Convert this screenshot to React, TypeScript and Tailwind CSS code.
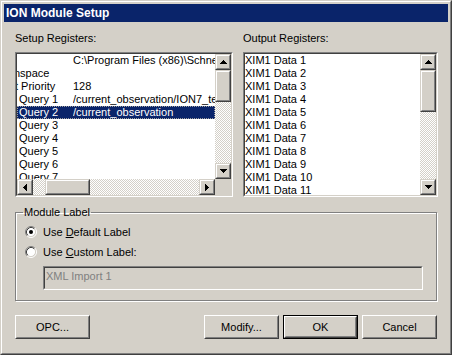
import type { ReactNode } from "react";

const FONT = "font-['Liberation_Sans','Arial',sans-serif]";

// classic 3D raised piece (scrollbar buttons, thumbs)
function Raised({ className, children }: { className: string; children?: ReactNode }) {
  return (
    <div className={`border border-t-[#d4d0c8] border-l-[#d4d0c8] border-r-[#404040] border-b-[#404040] ${className}`}>
      <div className="w-full h-full border border-t-white border-l-white border-r-[#808080] border-b-[#808080] bg-[#d4d0c8] flex items-center justify-center">
        {children}
      </div>
    </div>
  );
}

function Arrow({ dir }: { dir: "up" | "down" | "left" | "right" }) {
  if (dir === "up")
    return (
      <svg width="7" height="4" shapeRendering="crispEdges">
        <path d="M3 0h1v1h1v1h1v1h1v1H0V3h1V2h1V1h1z" fill="#000" />
      </svg>
    );
  if (dir === "down")
    return (
      <svg width="7" height="4" shapeRendering="crispEdges">
        <path d="M0 0h7v1H6v1H5v1H4v1H3V3H2V2H1V1H0z" fill="#000" />
      </svg>
    );
  if (dir === "left")
    return (
      <svg width="4" height="7" shapeRendering="crispEdges">
        <path d="M3 0h1v7H3V6H2V5H1V4H0V3h1V2h1V1h1z" fill="#000" />
      </svg>
    );
  return (
    <svg width="4" height="7" shapeRendering="crispEdges">
      <path d="M0 0h1v1h1v1h1v1h1v1H3v1H2v1H1v1H0z" fill="#000" />
    </svg>
  );
}

const track =
  "bg-[image:repeating-conic-gradient(#d4d0c8_0%_25%,#ffffff_0%_50%)] bg-[length:2px_2px]";

function Sunken({ className, children }: { className: string; children: ReactNode }) {
  return (
    <div className={`border border-t-[#808080] border-l-[#808080] border-r-white border-b-white ${className}`}>
      <div className="w-full h-full border border-t-[#404040] border-l-[#404040] border-r-[#d4d0c8] border-b-[#d4d0c8] flex flex-col overflow-hidden">
        {children}
      </div>
    </div>
  );
}

function Radio({ checked }: { checked: boolean }) {
  return (
    <svg width="12" height="12" className="shrink-0">
      <circle cx="6" cy="6" r="4.5" fill="#fff" />
      <path d="M2.11 9.89A5.5 5.5 0 0 1 9.89 2.11" stroke="#808080" fill="none" />
      <path d="M9.89 2.11A5.5 5.5 0 0 1 2.11 9.89" stroke="#fff" fill="none" />
      <path d="M2.82 9.18A4.5 4.5 0 0 1 9.18 2.82" stroke="#404040" fill="none" />
      <path d="M9.18 2.82A4.5 4.5 0 0 1 2.82 9.18" stroke="#d4d0c8" fill="none" />
      {checked && <circle cx="6" cy="6" r="2" fill="#000" />}
    </svg>
  );
}

function PushButton({ label, isDefault }: { label: string; isDefault?: boolean }) {
  const inner = (
    <div className="w-full h-full border border-t-white border-l-white border-r-[#404040] border-b-[#404040]">
      <div className="w-full h-full border border-t-[#d4d0c8] border-l-[#d4d0c8] border-r-[#808080] border-b-[#808080] bg-[#d4d0c8] flex items-center justify-center">
        {label}
      </div>
    </div>
  );
  return isDefault ? (
    <div className="w-[75px] h-[24px] border border-black">{inner}</div>
  ) : (
    <div className="w-[75px] h-[24px]">{inner}</div>
  );
}

const setupRows: [ReactNode, string][] = [
  ["", "C:\\Program Files (x86)\\Schneider Electric\\ION Enterprise"],
  [<span className="ml-[-5px]">nspace</span>, ""],
  [<span className="ml-[-4px]">t Priority</span>, "128"],
  ["Query 1", "/current_observation/ION7_temp"],
  ["Query 2", "/current_observation"],
  ["Query 3", ""],
  ["Query 4", ""],
  ["Query 5", ""],
  ["Query 6", ""],
  ["Query 7", ""],
];

const outputRows = Array.from({ length: 11 }, (_, i) => `XIM1 Data ${i + 1}`);

export default function App() {
  return (
    <div className={`w-[452px] h-[355px] ${FONT} text-[11px] leading-[13px] text-black`}>
      {/* window frame */}
      <div className="w-full h-full border border-t-[#d4d0c8] border-l-[#d4d0c8] border-r-[#404040] border-b-[#404040]">
        <div className="w-full h-full border border-t-white border-l-white border-r-[#808080] border-b-[#808080] bg-[#d4d0c8] p-[2px] flex flex-col">
          {/* title bar */}
          <div className="h-[18px] bg-[#0a246a] text-white font-bold text-[12px] px-[2px] flex items-center">
            ION Module Setup
          </div>

          <div className="pl-[11px] pt-[10px] flex flex-col">
            {/* register lists */}
            <div className="flex gap-[10px]">
              <div className="flex flex-col w-[218px]">
                <div className="mb-[7px]">Setup Registers:</div>
                <Sunken className="h-[145px]">
                  <div className="flex h-[125px]">
                    <div className="flex-1 min-w-0 overflow-hidden bg-white">
                      {setupRows.map(([a, b], i) => (
                        <div
                          key={i}
                          className={
                            i === 4
                              ? "h-[13px] flex whitespace-nowrap bg-[#0a246a] text-white outline outline-1 outline-dotted outline-[#a0a0a0] -outline-offset-1"
                              : "h-[13px] flex whitespace-nowrap"
                          }
                        >
                          <div className="w-[56px] shrink-0 pl-[2px] overflow-hidden">{a}</div>
                          <div className="flex-1 min-w-0 overflow-hidden">{b}</div>
                        </div>
                      ))}
                    </div>
                    <div className="w-[16px] flex flex-col">
                      <Raised className="h-[16px]"><Arrow dir="up" /></Raised>
                      <Raised className="h-[32px]" />
                      <div className={`flex-1 ${track}`} />
                      <Raised className="h-[16px]"><Arrow dir="down" /></Raised>
                    </div>
                  </div>
                  <div className="flex h-[16px]">
                    <Raised className="w-[16px]"><Arrow dir="left" /></Raised>
                    <div className={`w-[12px] ${track}`} />
                    <Raised className="w-[45px]" />
                    <div className={`flex-1 ${track}`} />
                    <Raised className="w-[16px]"><Arrow dir="right" /></Raised>
                    <div className="w-[16px] bg-[#d4d0c8]" />
                  </div>
                </Sunken>
              </div>

              <div className="flex flex-col w-[195px]">
                <div className="mb-[7px]">Output Registers:</div>
                <Sunken className="h-[145px]">
                  <div className="flex h-full">
                    <div className="flex-1 overflow-hidden bg-white">
                      {outputRows.map(r => (
                        <div key={r} className="h-[13px] whitespace-nowrap">{r}</div>
                      ))}
                    </div>
                    <div className="w-[16px] flex flex-col">
                      <Raised className="h-[16px]"><Arrow dir="up" /></Raised>
                      <Raised className="h-[42px]" />
                      <div className={`flex-1 ${track}`} />
                      <Raised className="h-[16px]"><Arrow dir="down" /></Raised>
                    </div>
                  </div>
                </Sunken>
              </div>
            </div>

            {/* module label group */}
            <fieldset className="mt-[9px] w-[422px] h-[95px] border border-[#808080] shadow-[1px_1px_0_#fff,inset_1px_1px_0_#fff] pl-[9px] pb-[10px]">
              <legend className="ml-[-2px] px-[1px]">Module Label</legend>
              <div className="mt-[5px] h-[16px] flex items-center gap-[6px]">
                <Radio checked />
                <span>Use <span className="underline">D</span>efault Label</span>
              </div>
              <div className="mt-[4px] h-[16px] flex items-center gap-[6px]">
                <Radio checked={false} />
                <span>Use <span className="underline">C</span>ustom Label:</span>
              </div>
              <div className="ml-[18px] mt-[6px] w-[380px] h-[24px] border border-t-[#808080] border-l-[#808080] border-r-white border-b-white">
                <div className="w-full h-full border border-t-[#404040] border-l-[#404040] border-r-[#d4d0c8] border-b-[#d4d0c8] bg-[#d4d0c8] text-[#808080] pl-[1px] pt-[2px]">
                  XML Import 1
                </div>
              </div>
            </fieldset>

            {/* buttons */}
            <div className="mt-[14px] w-[422px] flex">
              <PushButton label="OPC..." />
              <div className="flex-1" />
              <div className="flex gap-[4px]">
                <PushButton label="Modify..." />
                <PushButton label="OK" isDefault />
                <PushButton label="Cancel" />
              </div>
            </div>
          </div>
        </div>
      </div>
    </div>
  );
}
